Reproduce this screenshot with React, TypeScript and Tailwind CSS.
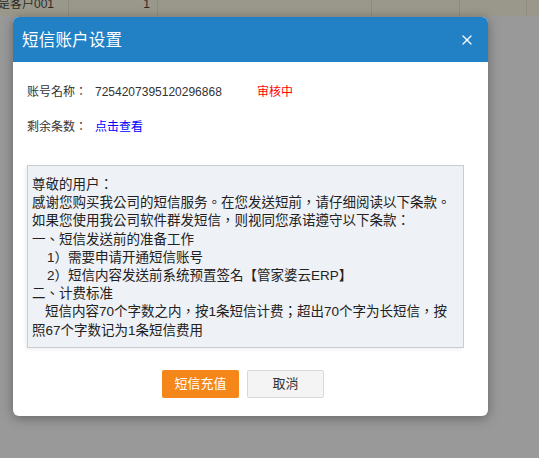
import { X } from "lucide-react";

const terms = [
  { text: "尊敬的用户：", indent: false },
  { text: "感谢您购买我公司的短信服务。在您发送短前，请仔细阅读以下条款。", indent: false },
  { text: "如果您使用我公司软件群发短信，则视同您承诺遵守以下条款：", indent: false },
  { text: "一、短信发送前的准备工作", indent: false },
  { text: "1）需要申请开通短信账号", indent: true },
  { text: "2）短信内容发送前系统预置签名【管家婆云ERP】", indent: true },
  { text: "二、计费标准", indent: false },
];

export default function App() {
  return (
    <div className="relative w-[539px] h-[458px] bg-[#999999] overflow-hidden font-['Liberation_Sans','Noto_Sans_CJK_TC',sans-serif] text-[#333]">
      {/* table row behind the overlay */}
      <div className="flex h-[16px] bg-[#9a988a] text-[12px] leading-[12px] text-[#2b2b26]">
        <div className="w-[71px] border-r border-[#8f8d80] -mt-[2px] -ml-[2px] whitespace-nowrap">是客户001</div>
        <div className="w-[89px] border-r border-[#8f8d80] text-right pr-[7px] -mt-[2px]">1</div>
        <div className="w-[214px] border-r border-[#8f8d80]" />
        <div className="w-[88px] border-r border-[#8f8d80]" />
        <div className="w-[67px] border-r border-[#8f8d80]" />
      </div>

      {/* dialog */}
      <div className="absolute left-[13px] top-[17px] w-[475px] rounded-[6px] bg-white shadow-[0_2px_12px_rgba(0,0,0,0.35)]">
        <div className="h-[45px] bg-[#2280c5] rounded-t-[6px] flex items-center justify-between pl-[9px] pr-[13px]">
          <span className="text-[16.5px] text-white tracking-[0.2px] font-['Noto_Sans_CJK_SC',sans-serif]">短信账户设置</span>
          <X className="w-[16px] h-[16px] text-white" strokeWidth={1.8} />
        </div>

        <div className="pt-[21px] pb-[18px] rounded-b-[6px]">
          <div className="flex pl-[14px] text-[12px] leading-[18px]">
            <span className="w-[68px]">账号名称：</span>
            <span className="w-[162px]">7254207395120296868</span>
            <span className="text-[#ff0000]">审核中</span>
          </div>
          <div className="flex pl-[14px] mt-[17px] text-[12px] leading-[18px]">
            <span className="w-[68px]">剩余条数：</span>
            <span className="text-[#0000ff]">点击查看</span>
          </div>

          <div className="ml-[14px] mt-[29px] w-[437px] h-[183px] border border-[#c9ccd2] bg-[#eef1f6] pt-[10px] pl-[4px] pr-[8px] text-[13.5px] leading-[18.2px] text-[#222] shadow-[-2px_2px_3px_rgba(0,0,0,0.06)]">
            {terms.map((t) => (
              <div key={t.text} className={t.indent ? "pl-[15px]" : ""}>
                {t.text}
              </div>
            ))}
            <div className="indent-[13px]">
              短信内容70个字数之内，按1条短信计费；超出70个字为长短信，按照67个字数记为1条短信费用
            </div>
          </div>

          <div className="flex justify-center gap-[8px] pr-[15px] mt-[22px]">
            <button className="w-[77px] h-[28px] rounded-[2px] bg-[#f5861a] text-white text-[13px]">
              短信充值
            </button>
            <button className="w-[77px] h-[28px] rounded-[2px] bg-[#f4f4f4] border border-[#d9d9d9] text-[#333] text-[13px]">
              取消
            </button>
          </div>
        </div>
      </div>
    </div>
  );
}
